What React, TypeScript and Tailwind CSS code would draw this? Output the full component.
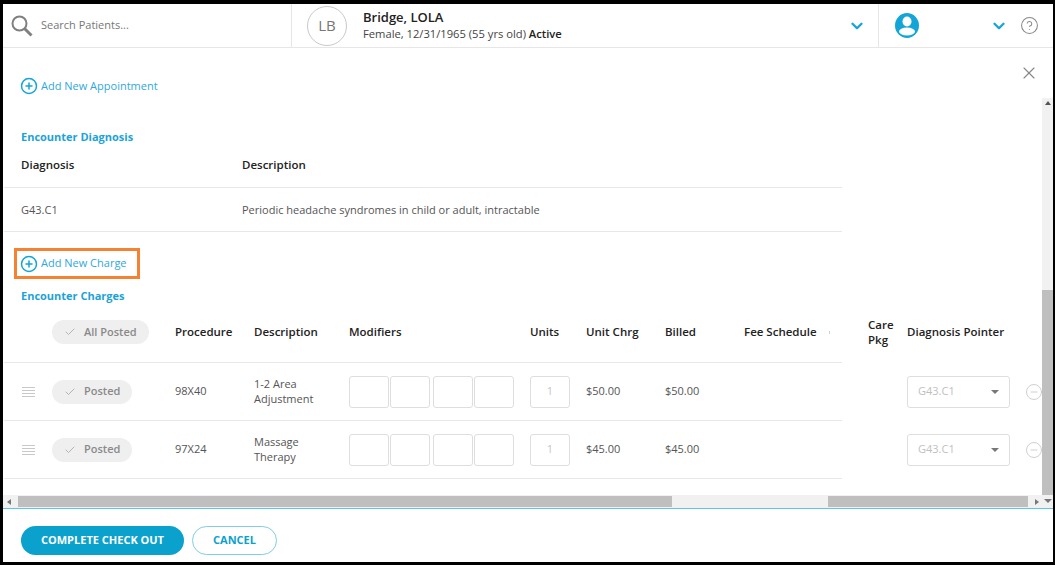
import { ChevronDown, CirclePlus, CircleMinus, CircleHelp, Check, X } from "lucide-react";

const columns =
  "grid grid-cols-[172px_79px_95px_181px_56px_79px_79px_124px_39px_118px_16px] items-center";

const charges = [
  { procedure: "98X40", description: ["1-2 Area", "Adjustment"], unitCharge: "$50.00", billed: "$50.00" },
  { procedure: "97X24", description: ["Massage", "Therapy"], unitCharge: "$45.00", billed: "$45.00" }
];

function Divider() {
  return <div className="ml-px h-px w-[838px] bg-[#e8e8e8]" />;
}

function AddLink({ label }: { label: string }) {
  return (
    <button type="button" className="flex items-center gap-[3px] text-[11px] text-[#2fa9dc]">
      <CirclePlus size={18} strokeWidth={2} className="text-[#12a5d6]" />
      {label}
    </button>
  );
}

function PostedPill({ label }: { label: string }) {
  return (
    <span className="flex h-6 items-center gap-2 rounded-full bg-[#efefef] px-3 text-[11px] font-semibold text-[#8a8a8a]">
      <Check size={12} strokeWidth={1.5} className="text-[#a0a0a0]" />
      {label}
    </span>
  );
}

function Grip() {
  return (
    <div className="flex w-[13px] flex-col gap-[2px]">
      <span className="h-px bg-[#c8c8c8]" />
      <span className="h-px bg-[#c8c8c8]" />
      <span className="h-px bg-[#c8c8c8]" />
      <span className="h-px bg-[#c8c8c8]" />
    </div>
  );
}

function ChargeRow({ charge }: { charge: (typeof charges)[number] }) {
  return (
    <>
      <div className={`${columns} h-[57px] text-[11px] text-[#555]`}>
        <div className="flex items-center gap-[17px] pl-[19px]">
          <Grip />
          <span className="inline-flex">
            <PostedPill label="Posted" />
          </span>
        </div>
        <div>{charge.procedure}</div>
        <div className="pb-[2px] text-[11px] leading-[15px]">
          {charge.description[0]}
          <br />
          {charge.description[1]}
        </div>
        <div className="flex gap-px">
          <div className="h-8 w-10 rounded-[3px] border border-[#dedede]" />
          <div className="h-8 w-10 rounded-[3px] border border-[#dedede]" />
          <div className="ml-[2px] h-8 w-10 rounded-[3px] border border-[#dedede]" />
          <div className="h-8 w-10 rounded-[3px] border border-[#dedede]" />
        </div>
        <div className="flex h-8 w-10 items-center justify-center rounded-[3px] border border-[#dedede] text-[#c4c4c4]">
          1
        </div>
        <div>{charge.unitCharge}</div>
        <div>{charge.billed}</div>
        <div />
        <div />
        <div className="flex h-8 w-[103px] items-center justify-between rounded-[3px] border border-[#dedede] px-[10px] text-[#c0c0c0]">
          G43.C1
          <span className="h-0 w-0 border-x-[4px] border-t-[4px] border-x-transparent border-t-[#777]" />
        </div>
        <CircleMinus size={18} strokeWidth={1.2} className="text-[#c9c9c9]" />
      </div>
      <Divider />
    </>
  );
}

export default function App() {
  return (
    <div className="flex h-[565px] w-[1055px] flex-col overflow-hidden border-b-[3px] border-l-[3px] border-r-[2px] border-t-[4px] border-black bg-white font-['Open_Sans',sans-serif] text-[#222]">
      <header className="flex h-11 shrink-0 items-center border-b border-[#e6e6e6]">
        <div className="flex h-full w-[289px] shrink-0 items-center gap-2 border-r border-[#e6e6e6] pl-2">
          <svg width="22" height="22" viewBox="0 0 22 22" fill="none" stroke="#808080">
            <circle cx="8.5" cy="8.5" r="7" strokeWidth="2" />
            <path d="M13.5 13.5 L20.5 20.5" strokeWidth="3" />
          </svg>
          <span className="text-[11px] text-[#777]">Search Patients...</span>
        </div>
        <div className="flex h-full w-[587px] shrink-0 items-center border-r border-[#e6e6e6] pl-[15px] pr-3">
          <div className="flex h-10 w-10 items-center justify-center rounded-full border border-[#c9c9c9] text-[15px] text-[#777]">
            LB
          </div>
          <div className="ml-4 flex-1 pb-[2px]">
            <div className="text-[13px] font-semibold leading-[18px] text-[#222]">Bridge, LOLA</div>
            <div className="text-[11.2px] leading-[16px] text-[#444]">
              Female, 12/31/1965 (55 yrs old) <span className="font-semibold text-[#222]">Active</span>
            </div>
          </div>
          <ChevronDown size={18} strokeWidth={3} className="text-[#12a5d6]" />
        </div>
        <div className="flex h-full flex-1 items-center pl-4">
          <svg width="24" height="25" viewBox="0 0 24 25" className="text-[#12a5d6]">
            <ellipse cx="12" cy="12.5" rx="12" ry="12.5" fill="currentColor" />
            <ellipse cx="12" cy="8.5" rx="4.5" ry="5" fill="white" />
            <ellipse cx="12" cy="18.5" rx="8" ry="4" fill="white" />
          </svg>
          <ChevronDown size={18} strokeWidth={3} className="ml-[71px] text-[#12a5d6]" />
          <CircleHelp size={19} strokeWidth={1.3} className="ml-3 text-[#888]" />
        </div>
      </header>

      <main className="relative flex min-h-0 flex-1">
        <button type="button" className="absolute right-[14px] top-[15px] text-[#888]">
          <X size={20} strokeWidth={1.4} />
        </button>

        <div className="flex w-[1039px] flex-col pt-[30px]">
          <div className="flex h-4 items-center pl-[17px]">
            <AddLink label="Add New Appointment" />
          </div>

          <h2 className="ml-[18px] mt-[35px] text-[11px] font-bold leading-4 text-[#1ca3d8]">
            Encounter Diagnosis
          </h2>
          <div className="flex h-[42px] items-center pb-[2px] text-[11.5px] font-semibold text-[#222]">
            <span className="w-[239px] pl-[18px]">Diagnosis</span>
            <span>Description</span>
          </div>
          <Divider />
          <div className="flex h-[43px] items-center pt-px text-[11px] text-[#555]">
            <span className="w-[239px] pl-[18px]">G43.C1</span>
            <span>Periodic headache syndromes in child or adult, intractable</span>
          </div>
          <Divider />

          <div className="ml-[11px] mt-4 flex h-[31px] w-[126px] items-center border-[3px] border-[#f58233] pl-[3px]">
            <AddLink label="Add New Charge" />
          </div>

          <h2 className="ml-[18px] mt-[9px] text-[11px] font-bold leading-4 text-[#1ca3d8]">
            Encounter Charges
          </h2>

          <div className={`${columns} h-[58px] pb-[2px] text-[11.5px] font-semibold text-[#222]`}>
            <div className="pl-[49px]">
              <span className="inline-flex">
                <PostedPill label="All Posted" />
              </span>
            </div>
            <div>Procedure</div>
            <div>Description</div>
            <div>Modifiers</div>
            <div>Units</div>
            <div>Unit Chrg</div>
            <div>Billed</div>
            <div className="flex items-center">
              Fee Schedule
              <span className="ml-[12px] h-[3px] w-px bg-[#cfcfcf]" />
            </div>
            <div className="leading-[15px]">
              Care
              <br />
              Pkg
            </div>
            <div className="whitespace-nowrap">Diagnosis Pointer</div>
          </div>
          <Divider />

          {charges.map((charge) => (
            <ChargeRow key={charge.procedure} charge={charge} />
          ))}

          <div className="mt-4 flex h-[13px] shrink-0 items-center bg-[#f1f1f1]">
            <span className="ml-1 h-0 w-0 border-y-[3px] border-r-[4px] border-y-transparent border-r-[#777]" />
            <div className="ml-[7px] h-[11px] w-[654px] bg-[#bfbfbf]" />
            <div className="ml-[156px] h-[11px] w-[200px] bg-[#bfbfbf]" />
            <span className="ml-[7px] h-0 w-0 border-y-[3px] border-l-[4px] border-y-transparent border-l-[#777]" />
          </div>
        </div>

        <div className="mt-[50px] flex h-[410px] w-[11px] flex-col items-center bg-[#f1f1f1]">
          <span className="mt-[3px] h-0 w-0 border-x-[3px] border-b-[4px] border-x-transparent border-b-[#555]" />
          <div className="mt-[185px] h-[205px] w-full bg-[#bfbfbf]" />
          <span className="mt-1 h-0 w-0 border-x-[4px] border-t-[4px] border-x-transparent border-t-[#777]" />
        </div>
      </main>

      <footer className="flex h-[54px] shrink-0 items-start gap-2 border-t border-[#5cc6ea] pl-[18px] pt-[17px]">
        <button
          type="button"
          className="h-[29px] w-[163px] rounded-full bg-[#0ba1cd] text-[11px] font-bold text-white"
        >
          COMPLETE CHECK OUT
        </button>
        <button
          type="button"
          className="h-[29px] w-[85px] rounded-full border border-[#7fcde6] text-[11px] font-bold text-[#0ba1cd]"
        >
          CANCEL
        </button>
      </footer>
    </div>
  );
}
